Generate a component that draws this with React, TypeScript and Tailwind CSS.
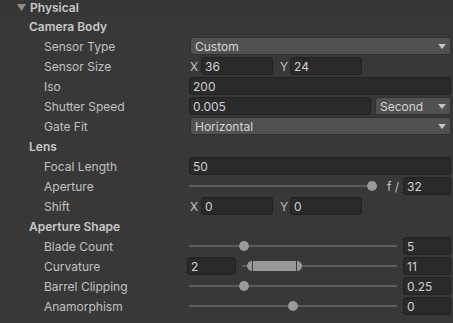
import React from "react"

const font = { fontFamily: "Inter, 'Noto Sans', sans-serif" }

function Row({
  label,
  indent = 44,
  bold = false,
  children,
}: {
  label: string
  indent?: number
  bold?: boolean
  children?: React.ReactNode
}) {
  return (
    <div className="flex h-5 items-center">
      <div
        className={`w-[189px] shrink-0 pt-[1px] text-[12px] leading-none ${bold ? "font-semibold text-[#c8c8c8]" : "text-[#c2c2c2]"}`}
        style={{ paddingLeft: indent }}
      >
        {label}
      </div>
      <div className="flex flex-1 items-center pr-[2px]">{children}</div>
    </div>
  )
}

function Field({ value, className = "" }: { value: string; className?: string }) {
  return (
    <div
      className={`flex h-[18px] items-center rounded-[3px] border border-[#212121] bg-[#2a2a2a] pl-[3px] pt-[1px] text-[12px] leading-none text-[#d2d2d2] ${className}`}
    >
      {value}
    </div>
  )
}

function Dropdown({ value, className = "" }: { value: string; className?: string }) {
  return (
    <div
      className={`flex h-[18px] items-center justify-between rounded-[3px] border border-[#303030] bg-[#515151] pl-[4px] pr-[4px] text-[12px] leading-none text-[#d6d6d6] ${className}`}
    >
      <span className="pt-[1px]">{value}</span>
      <svg width="8" height="5" viewBox="0 0 8 5">
        <path d="M0 0 H8 L4 5 Z" fill="#c4c4c4" />
      </svg>
    </div>
  )
}

function Slider({ t, className = "" }: { t: number; className?: string }) {
  return (
    <div className={`relative h-[18px] ${className}`}>
      <div className="absolute left-0 right-0 top-[8px] h-[2px] bg-[#5c5c5c]" />
      <div
        className="absolute top-[4px] h-[10px] w-[10px] rounded-full bg-[#999999]"
        style={{ left: `calc(${t} * (100% - 10px))` }}
      />
    </div>
  )
}

function Pair({ x, y }: { x: string; y: string }) {
  return (
    <div className="flex items-center text-[12px] leading-none text-[#c2c2c2]">
      <span className="w-[12px] pl-[1px] pt-[1px]">X</span>
      <Field value={x} className="w-[72px]" />
      <span className="ml-[6px] w-[11px] pl-[1px] pt-[1px]">Y</span>
      <Field value={y} className="w-[72px]" />
    </div>
  )
}

export default function App() {
  return (
    <div className="h-[323px] w-[453px] overflow-hidden bg-[#383838]" style={font}>
      <div className="flex h-[16px] items-center bg-[#363636] pb-[1px]">
        <svg className="ml-[17px]" width="9" height="7" viewBox="0 0 9 7">
          <path d="M0 0 H9 L4.5 7 Z" fill="#8c8c8c" />
        </svg>
        <span className="ml-[4px] text-[12px] font-semibold leading-none text-[#c8c8c8]">Physical</span>
      </div>

      <Row label="Camera Body" indent={29} bold />
      <Row label="Sensor Type">
        <Dropdown value="Custom" className="ml-[1px] flex-1" />
      </Row>
      <Row label="Sensor Size">
        <Pair x="36" y="24" />
      </Row>
      <Row label="Iso">
        <Field value="200" className="flex-1" />
      </Row>
      <Row label="Shutter Speed">
        <Field value="0.005" className="w-[182px]" />
        <Dropdown value="Second" className="ml-[4px] flex-1" />
      </Row>
      <Row label="Gate Fit">
        <Dropdown value="Horizontal" className="ml-[1px] flex-1" />
      </Row>

      <Row label="Lens" indent={29} bold />
      <Row label="Focal Length">
        <Field value="50" className="flex-1" />
      </Row>
      <Row label="Aperture">
        <Slider t={1} className="w-[188px]" />
        <span className="ml-[10px] w-[16px] pt-[1px] text-[12px] leading-none text-[#c2c2c2]">f /</span>
        <Field value="32" className="flex-1" />
      </Row>
      <Row label="Shift">
        <Pair x="0" y="0" />
      </Row>

      <Row label="Aperture Shape" indent={29} bold />
      <Row label="Blade Count">
        <Slider t={0.25} className="w-[208px]" />
        <Field value="5" className="ml-[6px] flex-1" />
      </Row>
      <Row label="Curvature">
        <Field value="2" className="-ml-[2px] w-[49px]" />
        <div className="relative ml-[6px] h-[18px] w-[155px]">
          <div className="absolute left-0 right-0 top-[8px] h-[2px] bg-[#5c5c5c]" />
          <div className="absolute left-[5px] top-[4px] flex h-[10px] w-[55px] items-center justify-between rounded-full bg-[#999999] px-[5px]">
            <div className="h-[10px] w-[1px] bg-[#3a3a3a]" />
            <div className="h-[10px] w-[1px] bg-[#3a3a3a]" />
          </div>
        </div>
        <Field value="11" className="ml-[6px] flex-1" />
      </Row>
      <Row label="Barrel Clipping">
        <Slider t={0.25} className="w-[208px]" />
        <Field value="0.25" className="ml-[6px] flex-1" />
      </Row>
      <Row label="Anamorphism">
        <Slider t={0.5} className="w-[208px]" />
        <Field value="0" className="ml-[6px] flex-1" />
      </Row>
    </div>
  )
}
